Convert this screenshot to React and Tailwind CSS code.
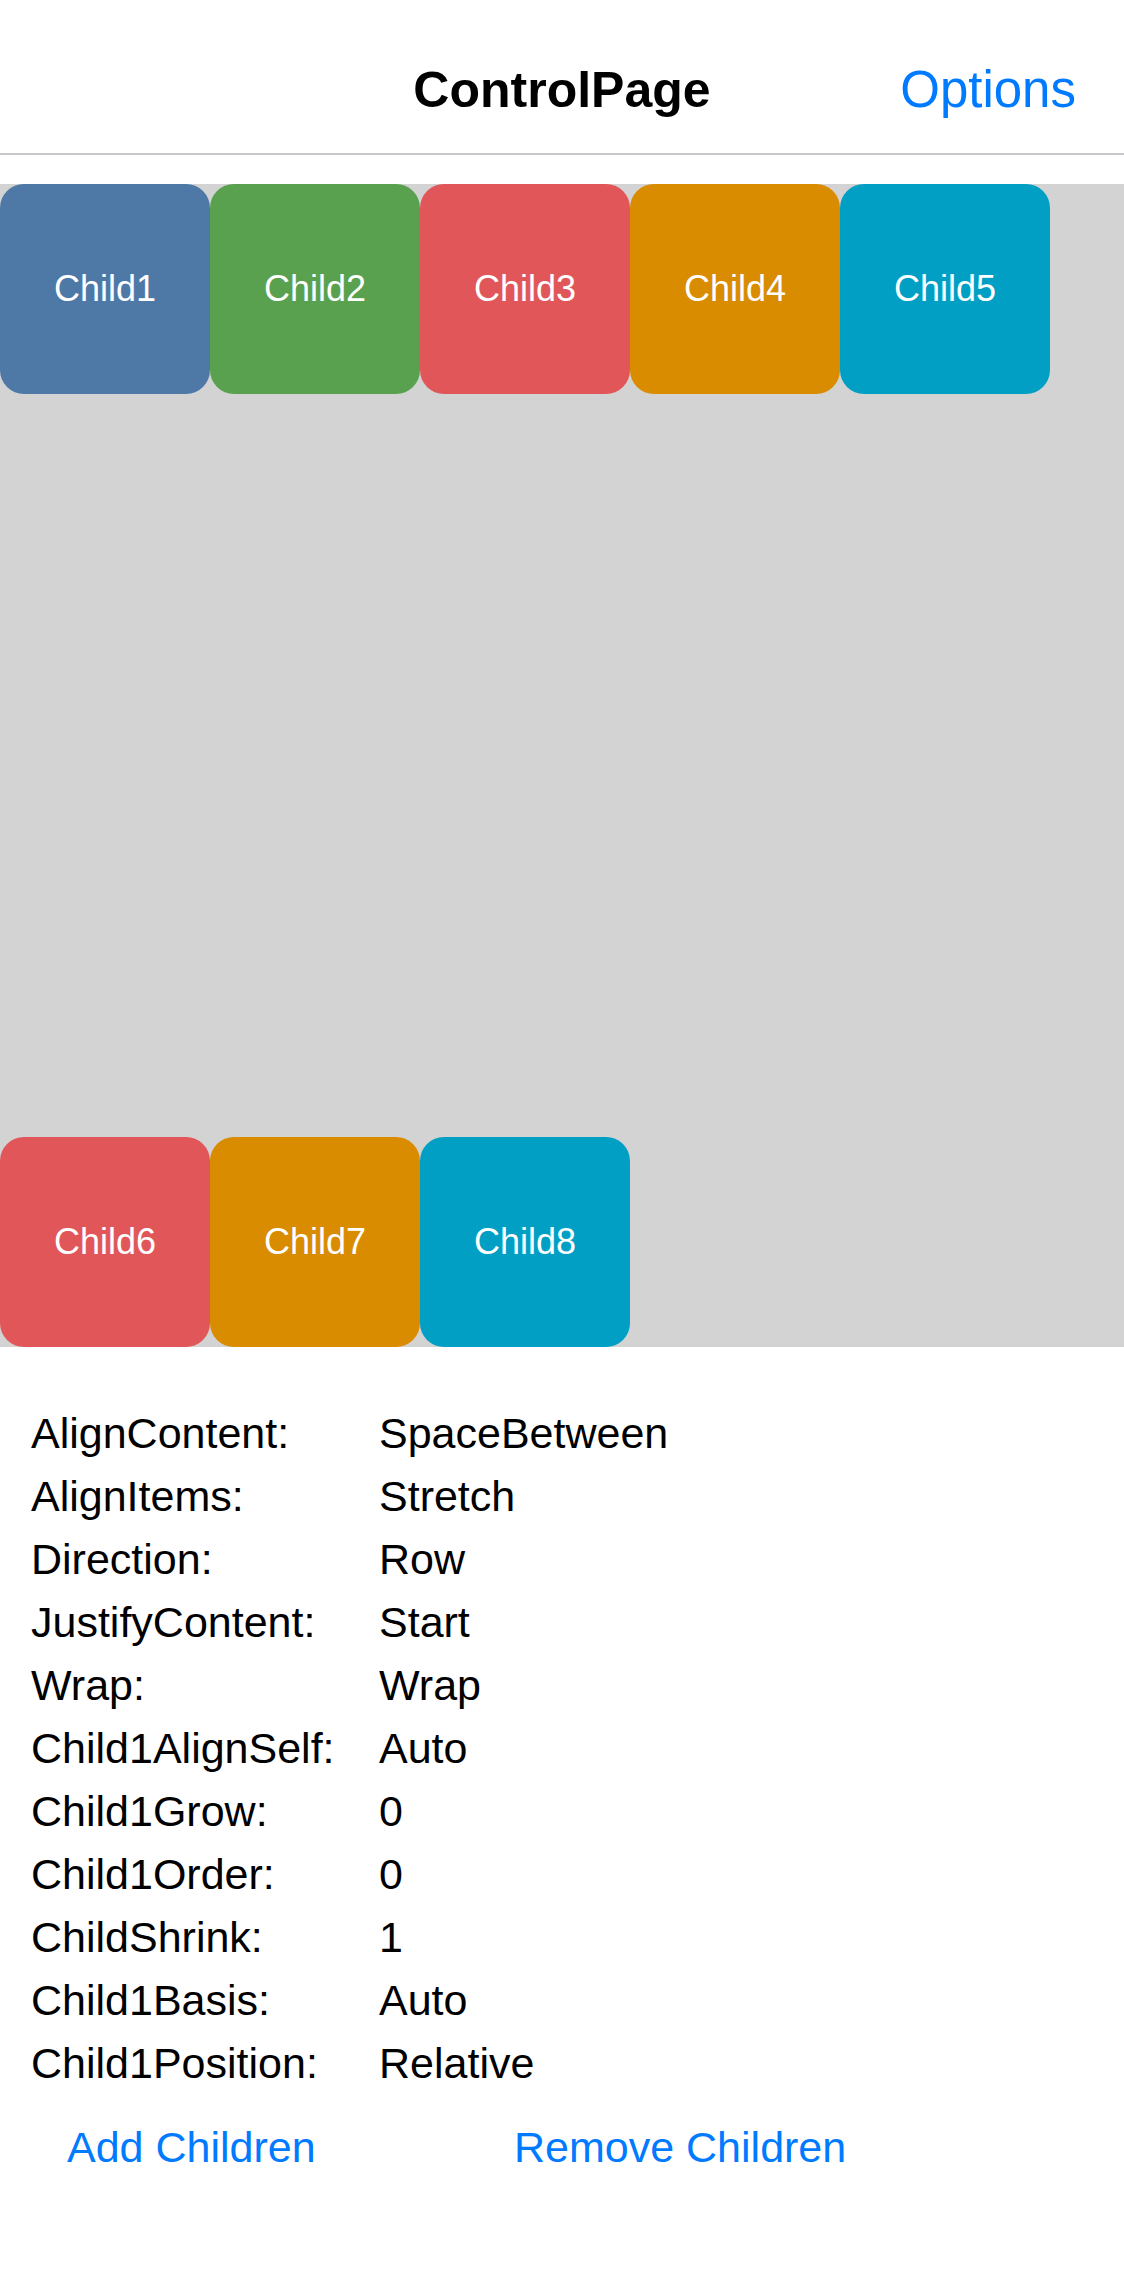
import React from 'react';

const children = [
  { name: 'Child1', color: 'bg-[#4e79a7]' },
  { name: 'Child2', color: 'bg-[#59a14f]' },
  { name: 'Child3', color: 'bg-[#e15759]' },
  { name: 'Child4', color: 'bg-[#d98c00]' },
  { name: 'Child5', color: 'bg-[#019fc4]' },
  { name: 'Child6', color: 'bg-[#e15759]' },
  { name: 'Child7', color: 'bg-[#d98c00]' },
  { name: 'Child8', color: 'bg-[#019fc4]' },
];

const props = [
  ['AlignContent:', 'SpaceBetween'],
  ['AlignItems:', 'Stretch'],
  ['Direction:', 'Row'],
  ['JustifyContent:', 'Start'],
  ['Wrap:', 'Wrap'],
  ['Child1AlignSelf:', 'Auto'],
  ['Child1Grow:', '0'],
  ['Child1Order:', '0'],
  ['ChildShrink:', '1'],
  ['Child1Basis:', 'Auto'],
  ['Child1Position:', 'Relative'],
];

const App = () => {
  return (
    <div className="w-[1124px] min-h-[2286px] bg-white font-['Liberation_Sans',Arial,sans-serif] text-black">
      {/* nav bar */}
      <div className="grid grid-cols-3 h-[155px] pt-[65px] border-b-2 border-[#c8c7cc] items-baseline">
        <div />
        <div className="text-center text-[50px] leading-[50px] font-bold">ControlPage</div>
        <div className="text-right pr-[48px] text-[51px] leading-[50px] text-[#007aff]">Options</div>
      </div>

      {/* flex layout playground */}
      <div className="mt-[29px] h-[1163px] bg-[#d3d3d3] flex flex-wrap content-between">
        {children.map(c => (
          <div key={c.name} className={`w-[210px] h-[210px] rounded-[24px] flex items-center justify-center text-white text-[36px] ${c.color}`}>
            {c.name}
          </div>
        ))}
      </div>

      {/* properties */}
      <div className="pt-[55px] pl-[31px] grid grid-cols-[348px_1fr] text-[43px] leading-[63px]">
        {props.map(([label, value]) => (
          <React.Fragment key={label}>
            <div>{label}</div>
            <div>{value}</div>
          </React.Fragment>
        ))}
      </div>

      <div className="mt-[28px] pl-[67px] flex text-[43px] leading-[49px] text-[#007aff]">
        <button className="w-[447px] text-left">Add Children</button>
        <button className="text-left">Remove Children</button>
      </div>
    </div>
  );
};

export default App;
